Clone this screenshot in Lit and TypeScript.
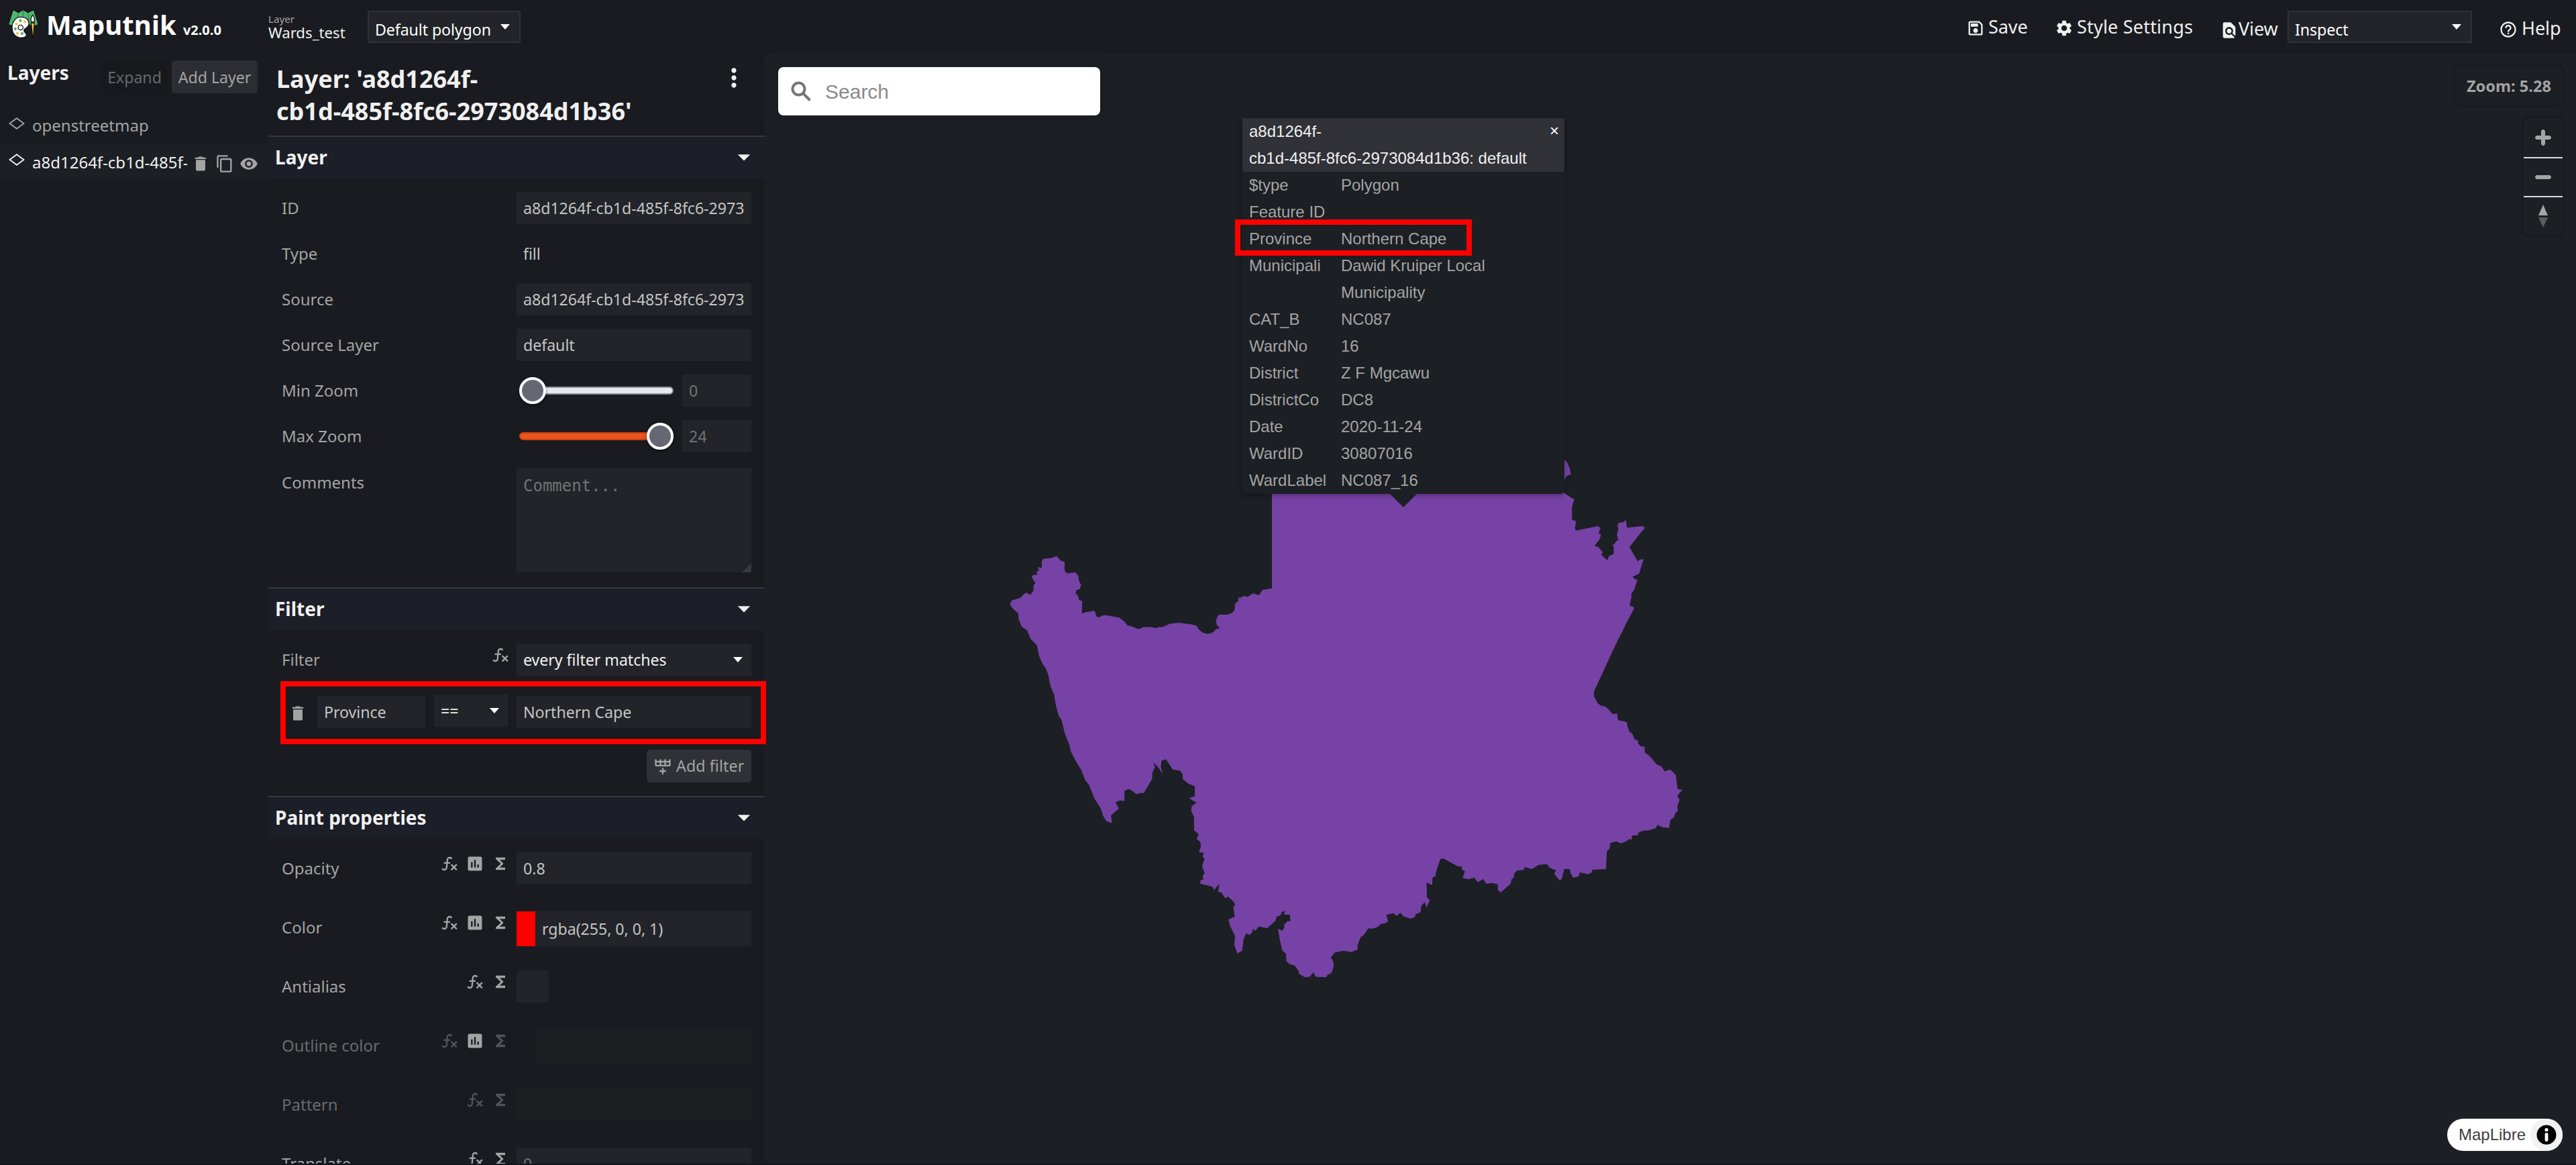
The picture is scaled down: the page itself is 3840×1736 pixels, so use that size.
import { LitElement, html, svg, css, nothing } from "lit";
import { customElement } from "lit/decorators.js";
import { classMap } from "lit/directives/class-map.js";

const ICONS: Record<string, string> = {
  save: "M17 3H5c-1.11 0-2 .9-2 2v14c0 1.1.89 2 2 2h14c1.1 0 2-.9 2-2V7l-4-4zm2 16H5V5h11.17L19 7.83V19zm-7-7c-1.66 0-3 1.34-3 3s1.34 3 3 3 3-1.34 3-3-1.34-3-3-3zM6 6h9v4H6z",
  settings: "M19.14 12.94c.04-.3.06-.61.06-.94 0-.32-.02-.64-.07-.94l2.03-1.58a.49.49 0 0 0 .12-.61l-1.92-3.32a.488.488 0 0 0-.59-.22l-2.39.96c-.5-.38-1.03-.7-1.62-.94l-.36-2.54a.484.484 0 0 0-.48-.41h-3.84c-.24 0-.43.17-.47.41l-.36 2.54c-.59.24-1.13.57-1.62.94l-2.39-.96c-.22-.08-.47 0-.59.22L2.74 8.87c-.12.21-.08.47.12.61l2.03 1.58c-.05.3-.09.63-.09.94s.02.64.07.94l-2.03 1.58a.49.49 0 0 0-.12.61l1.92 3.32c.12.22.37.29.59.22l2.39-.96c.5.38 1.03.7 1.62.94l.36 2.54c.05.24.24.41.48.41h3.84c.24 0 .44-.17.47-.41l.36-2.54c.59-.24 1.13-.56 1.62-.94l2.39.96c.22.08.47 0 .59-.22l1.92-3.32c.12-.22.07-.47-.12-.61l-2.01-1.58zM12 15.6c-1.98 0-3.6-1.62-3.6-3.6s1.62-3.6 3.6-3.6 3.6 1.62 3.6 3.6-1.62 3.6-3.6 3.6z",
  find: "M20 19.59V8l-6-6H6c-1.1 0-1.99.9-1.99 2L4 20c0 1.1.89 2 1.99 2H18c.45 0 .85-.15 1.19-.4l-4.43-4.43c-.8.52-1.74.83-2.76.83-2.76 0-5-2.24-5-5s2.24-5 5-5 5 2.24 5 5c0 1.02-.31 1.96-.83 2.75L20 19.59zM9 13c0 1.66 1.34 3 3 3s3-1.34 3-3-1.34-3-3-3-3 1.34-3 3z",
  help: "M11 18h2v-2h-2v2zm1-16C6.48 2 2 6.48 2 12s4.48 10 10 10 10-4.48 10-10S17.52 2 12 2zm0 18c-4.41 0-8-3.59-8-8s3.59-8 8-8 8 3.59 8 8-3.59 8-8 8zm0-14c-2.21 0-4 1.79-4 4h2c0-1.1.9-2 2-2s2 .9 2 2c0 2-3 1.75-3 5h2c0-2.25 3-2.5 3-5 0-2.21-1.79-4-4-4z",
  trash: "M6 19c0 1.1.9 2 2 2h8c1.1 0 2-.9 2-2V7H6v12zM19 4h-3.5l-1-1h-5l-1 1H5v2h14V4z",
  copy: "M16 1H4c-1.1 0-2 .9-2 2v14h2V3h12V1zm3 4H8c-1.1 0-2 .9-2 2v14c0 1.1.9 2 2 2h11c1.1 0 2-.9 2-2V7c0-1.1-.9-2-2-2zm0 16H8V7h11v14z",
  eye: "M12 4.5C7 4.5 2.73 7.61 1 12c1.73 4.39 6 7.5 11 7.5s9.27-3.11 11-7.5c-1.73-4.39-6-7.5-11-7.5zM12 17c-2.76 0-5-2.24-5-5s2.24-5 5-5 5 2.24 5 5-2.24 5-5 5zm0-8c-1.66 0-3 1.34-3 3s1.34 3 3 3 3-1.34 3-3-1.34-3-3-3z",
  chart: "M19 3H5c-1.1 0-2 .9-2 2v14c0 1.1.9 2 2 2h14c1.1 0 2-.9 2-2V5c0-1.1-.9-2-2-2zM9 17H7v-7h2v7zm4 0h-2V7h2v10zm4 0h-2v-4h2v4z",
  sigma: "M18 4H6v2l6.5 6L6 18v2h12v-3h-7l5-5-5-5h7z",
  fx: "M12.42 5.29C11.32 5.19 10.35 6 10.25 7.11L10 10H12.82V12H9.82L9.38 17.07C9.18 19.27 7.24 20.9 5.04 20.7C3.79 20.59 2.66 19.9 2 18.83L3.5 17.33C3.83 18.38 4.96 18.97 6 18.63C6.78 18.39 7.33 17.7 7.4 16.89L7.82 12H4.82V10H8L8.27 6.93C8.46 4.73 10.39 3.1 12.6 3.28C13.86 3.39 15 4.09 15.66 5.17L14.16 6.67C13.91 5.9 13.23 5.36 12.42 5.29M22 13.65L20.59 12.24L17.76 15.07L14.93 12.24L13.5 13.65L16.35 16.5L13.5 19.31L14.93 20.72L17.76 17.9L20.59 20.72L22 19.31L19.17 16.5L22 13.65Z",
  rowPlus: "M22,10A2,2 0 0,1 20,12H4A2,2 0 0,1 2,10V3H4V5H8V3H10V5H14V3H16V5H20V3H22V10M4,10H8V7H4V10M10,10H14V7H10V10M20,10V7H16V10H20M11,14H13V17H16V19H13V22H11V19H8V17H11V14Z",
  more: "M12 8c1.1 0 2-.9 2-2s-.9-2-2-2-2 .9-2 2 .9 2 2 2zm0 2c-1.1 0-2 .9-2 2s.9 2 2 2 2-.9 2-2-.9-2-2-2zm0 6c-1.1 0-2 .9-2 2s.9 2 2 2 2-.9 2-2-.9-2-2-2z",
  drop: "M7 10l5 5 5-5z",
};

const icon = (name: string, cls = "") => html`
  <svg class="icon ${cls}" viewBox="0 0 24 24" fill-rule="evenodd"><path d=${ICONS[name]}></path></svg>`;

/** Maps outline vertices of one tile to map coordinates. */
const tile = (ox: number, oy: number, sx: number, sy: number, pts: string) =>
  pts.trim().split(/\s+/).map((p) => {
    const [x, y] = p.split(",").map(Number);
    return `${(ox + x / sx).toFixed(1)},${(oy + y / sy).toFixed(1)}`;
  }).join(" ");

const WARD_OUTLINE = [
  tile(340, 600, 2.8, 2.8, `1165,20 1165,551 1140,555 1125,558 1112,579 1098,576 1087,572 1062,587 1048,582 1032,590 1026,588 1024,605
   1011,614 1009,640 1000,652 980,660 950,660 940,664 931,686 935,704 948,716 930,722 922,732 908,739 892,741 875,735 860,722 850,707
   830,701 800,697 775,694 738,699 710,712 690,713 680,717 660,712 630,713 608,721 595,716 580,709 562,706 550,690 528,673 510,670 473,663
   455,665 443,672 431,667 427,648 417,643 412,648 395,648 371,655 373,625 373,603 360,600 356,583 345,570 350,557 362,554 369,538 360,520
   357,500 346,485 328,486 313,489 303,483 299,470 300,440 285,437 265,415 258,420 240,425 212,427 205,435 204,463 197,466 191,460 188,466
   194,475 182,483 186,494 170,494 162,502 170,518 178,528 169,541 170,560 158,576 150,577 145,568 132,573 115,590 80,601 71,616 80,632
   106,656 108,680 120,710 143,727 158,762 184,789 192,830 207,865 221,885 231,910 241,960 256,995 262,1035 275,1083 287,1100 300,1155
   320,1205 325,1230 345,1270 370,1310 385,1350 402,1372 425,1430 450,1468 460,1500 474,1522 497,1530 493,1498 526,1470 512,1443 530,1436
   549,1438 550,1395 568,1388 580,1394 600,1410 613,1405 630,1405 665,1345 666,1318 677,1297 670,1277 690,1297 711,1327 701,1297 704,1270
   723,1264 751,1307 780,1311 792,1325 793,1347 815,1365 843,1377 843,1418 819,1426 850,1445 830,1460 828,1480 840,1505 840,1560`),
  tile(600, 1000, 1.96, 3, `78,470 92,490 86,510 97,525 98,545 93,569 107,573 103,590 109,598 102,632 109,662 103,678 106,690 97,697 96,710
   132,724 137,739 152,710 149,747 158,750 170,776 178,768 192,788 199,803 193,815 197,857 179,871 184,900 198,945 196,985 205,1022 219,1010
   223,960 230,933 240,939 248,930 250,912 257,921 268,902 292,909 316,877 320,857 330,853 335,836 344,832 341,848 358,849 360,879 352,877
   341,895 342,907 336,920 324,912 328,955 336,1008 347,1023 348,1057 358,1070 372,1076 384,1100 385,1113 401,1128 416,1127 427,1106
   434,1127 465,1128 468,1118 480,1109 487,1075 484,1055 478,1040 490,1018 515,1010 538,1016 556,1005 556,985 565,950 575,938 588,909
   598,912 613,905 625,890 636,888 645,880 640,850 661,842 670,855 681,841 691,857 712,867 722,860 727,846 740,838 742,810 752,793 758,816
   767,785 758,768 759,735 757,705 774,717 775,683 783,677 786,655 798,600 807,598 848,632 860,634 861,648 870,655 863,685 880,690 897,683
   907,704 923,690 932,711 950,707 966,714 966,738 974,750 1004,710 1006,690 1012,685 1014,665 1022,652 1042,648 1044,636 1065,645 1085,626
   1110,623 1117,640 1136,650 1131,667 1147,697 1153,688 1160,645 1176,645 1178,662 1186,684 1202,677 1206,660 1230,668 1240,661 1242,648
   1282,645 1283,600 1285,564 1292,555 1295,528 1312,521 1325,530 1340,522 1349,511 1356,515 1358,495 1374,494 1378,480 1390,474 1407,472
   1426,463 1433,447 1447,458 1466,461 1470,425 1480,415 1485,392 1492,385 1490,365 1497,335 1490,317 1505,290 1491,288 1488,250 1486,225
   1470,200 1453,208 1443,185 1430,178 1410,140 1395,123 1395,98 1384,97 1376,85 1376,72 1366,65 1358,40 1350,30 1343,0`),
  tile(860, 600, 2.904, 3, `1237,1192 1225,1185 1197,1180 1192,1150 1172,1152 1155,1130 1140,1118 1123,1115 1110,1105 1093,1075 1092,1052
   1180,855 1235,740 1266,680 1263,673 1246,668 1256,622 1252,618 1266,598 1280,553 1267,548 1260,537 1270,533 1288,524 1307,460 1290,462
   1282,470 1246,406 1254,395 1290,347 1314,319 1300,312 1235,319 1230,284 1220,294 1198,298 1194,312 1198,325 1191,350 1198,374 1190,377
   1180,393 1171,396 1178,404 1178,432 1172,440 1158,444 1150,464 1124,441 1130,428 1108,402 1103,405 1095,399 1116,372 1123,350 1112,344
   1121,320 1108,312 1014,332 1010,322 1015,290 997,283 997,228 1007,190 998,188 962,163 950,140 964,105 975,87 992,80 988,55 975,25 966,18
   940,18`),
].join(" ");

interface Prop {
  label: string;
  icons: string[];
  kind: "text" | "color" | "check";
  value?: string;
  unset?: boolean;
  placeholder?: boolean;
}

const PAINT: Prop[] = [
  { label: "Opacity", icons: ["fx", "chart", "sigma"], kind: "text", value: "0.8" },
  { label: "Color", icons: ["fx", "chart", "sigma"], kind: "color", value: "rgba(255, 0, 0, 1)" },
  { label: "Antialias", icons: ["fx", "sigma"], kind: "check" },
  { label: "Outline color", icons: ["fx", "chart", "sigma"], kind: "color", unset: true },
  { label: "Pattern", icons: ["fx", "sigma"], kind: "text", unset: true },
  { label: "Translate", icons: ["fx", "sigma"], kind: "text", value: "0", placeholder: true },
];

const FEATURE: [string, string][] = [
  ["$type", "Polygon"],
  ["Feature ID", ""],
  ["Province", "Northern Cape"],
  ["Municipali", "Dawid Kruiper Local Municipality"],
  ["CAT_B", "NC087"],
  ["WardNo", "16"],
  ["District", "Z F Mgcawu"],
  ["DistrictCo", "DC8"],
  ["Date", "2020-11-24"],
  ["WardID", "30807016"],
  ["WardLabel", "NC087_16"],
];

const shared = css`
  :host { box-sizing: border-box; }
  * { box-sizing: border-box; }
  .icon { display: block; flex: none; width: 28px; height: 28px; fill: currentColor; }
  .caret {
    flex: none; width: 14px; height: 8px; background: #fff;
    clip-path: polygon(0 0, 100% 0, 50% 100%);
  }
  .ui { font-size: 23.2px; letter-spacing: -0.05px; }
`;

@customElement("app-toolbar")
class AppToolbar extends LitElement {
  static styles = [shared, css`
    :host { display: flex; height: 80px; background: #191b20; color: #f0f0f0; }
    .brand { display: flex; width: 400px; padding-left: 10px; }
    .logo { width: 50px; height: 47px; margin-top: 11px; }
    .title { display: flex; align-items: baseline; height: 48px; margin: 13px 0 0 9px; gap: 10px; color: #fff; font-weight: 700; }
    .name { font-size: 40px; line-height: 48px; letter-spacing: 0.1px; }
    .version { font-size: 20px; }
    .source { width: 148px; padding-top: 18px; white-space: nowrap; }
    .small { font-size: 15.2px; line-height: 20px; color: #a4a4a4; }
    .file { font-size: 22.2px; line-height: 22px; }
    .select {
      display: flex; align-items: center; justify-content: space-between;
      height: 48px; margin-top: 16px; padding: 0 14px 0 9px;
      border: 2px solid #303237; background: #222429; color: #fff;
    }
    .select .ui { padding-top: 7px; letter-spacing: -0.1px; }
    .style { width: 228px; }
    .mode { width: 275px; }
    .gap { flex: 1; }
    .action { display: flex; align-items: center; height: 80px; font-size: 27px; letter-spacing: -0.1px; white-space: nowrap; }
    .action .icon { margin-top: 5px; }
    .save { width: 132px; padding-bottom: 1px; }
    .prefs { width: 246px; padding-bottom: 1px; letter-spacing: 0.2px; }
    .view { width: 101px; padding-top: 5px; }
    .help { width: 155px; padding: 2px 0 0 40px; }
    .save .icon, .prefs .icon { margin-right: 5px; }
    .help .icon { margin-right: 6px; }
  `];
  render() {
    const green = "#4fb86f", yellow = "#f7c04a";
    return html`
      <div class="brand">
        <svg class="logo" viewBox="30 3 150 141" stroke="#111" stroke-width="4" stroke-linejoin="round">
          <path fill=${green} d="M58 13L82 26L104 13L125 26L151 13L172 80L150 89L104 70L62 88L37 80Z"></path>
          <path fill="none" stroke="#236b3a" stroke-width="2.5" d="M82 26L76 74M104 14V56M125 26L130 78"></path>
          <path fill="#fff" d="M92 46C120 46 131 62 129 80C127 95 107 94 107 107C108 117 122 117 118 130C110 141 92 140 82 137C62 130 54 112 54 92C55 65 72 46 92 46Z"></path>
          <circle cx="92" cy="93" r="11" fill="#fff"></circle>
          <g stroke="none">
            ${[[91, 62], [68, 99], [99, 120]].map(([x, y]) => svg`<circle cx=${x} cy=${y} r="6.5" fill=${green}></circle>`)}
            ${[[111, 67], [74, 77], [78, 119]].map(([x, y]) => svg`<circle cx=${x} cy=${y} r="6.5" fill=${yellow}></circle>`)}
          </g>
          <path fill=${yellow} d="M139 72H154L149 137H146Z"></path>
          <path fill="#fff" d="M146 36C137 50 136 62 142 69H151C157 62 155 50 146 36Z"></path>
        </svg>
        <div class="title"><span class="name">Maputnik</span><span class="version">v2.0.0</span></div>
      </div>
      <div class="source"><div class="small">Layer</div><div class="file">Wards_test</div></div>
      <div class="select style"><span class="ui">Default polygon</span><span class="caret"></span></div>
      <div class="gap"></div>
      <div class="action save">${icon("save")}<span>Save</span></div>
      <div class="action prefs">${icon("settings")}<span>Style Settings</span></div>
      <div class="action view">${icon("find")}<span>View</span></div>
      <div class="select mode"><span class="ui">Inspect</span><span class="caret"></span></div>
      <div class="action help">${icon("help")}<span>Help</span></div>
    `;
  }
}

@customElement("layer-list")
class LayerList extends LitElement {
  static styles = [shared, css`
    :host { display: block; width: 400px; background: #191b20; color: #a4a4a4; }
    .head { display: flex; align-items: flex-start; height: 80px; padding: 10px 16px 0 11px; }
    .title { flex: 1; color: #f0f0f0; font-weight: 700; font-size: 28px; line-height: 36px; }
    .btn { display: flex; align-items: center; justify-content: center; height: 49px; border-radius: 5px; }
    .expand { width: 99px; margin-right: 6px; color: #66676a; background: #18191d; }
    .add { width: 128px; background: #2c2d32; }
    .row { display: flex; align-items: center; height: 54px; padding: 0 15px 1px 13px; font-size: 24px; white-space: nowrap; }
    .row.active { height: 53px; padding: 1px 15px 0 13px; background: #1c1f24; color: #f0f0f0; }
    .diamond { flex: none; width: 24px; height: 18px; margin: 0 11px 5px 0; fill: none; stroke: currentColor; stroke-width: 1.9; }
    .active .diamond { margin-bottom: 6px; }
    .name { flex: 1; overflow: hidden; }
    .tools { display: flex; gap: 8px; margin-left: 6px; padding-top: 5px; color: #a4a4a4; }
  `];
  row(name: string, active = false) {
    return html`
      <div class=${classMap({ row: true, active })}>
        <svg class="diamond" viewBox="0 0 24 18"><path d="M1.5 9L12 1.2L22.5 9L12 16.8Z"></path></svg>
        <span class="name">${name}</span>
        ${active ? html`<div class="tools">${icon("trash")}${icon("copy")}${icon("eye")}</div>` : nothing}
      </div>`;
  }
  render() {
    return html`
      <div class="head">
        <span class="title">Layers</span>
        <span class="btn expand ui">Expand</span>
        <span class="btn add ui">Add Layer</span>
      </div>
      ${this.row("openstreetmap")}
      ${this.row("a8d1264f-cb1d-485f-8fc6-2973084d1b36", true)}
    `;
  }
}

@customElement("layer-editor")
class LayerEditor extends LitElement {
  static styles = [shared, css`
    :host { display: block; position: relative; z-index: 1; width: 740px; background: #191b20; color: #a4a4a4; font-size: 24px; }
    .header { display: flex; justify-content: space-between; height: 122px; padding: 14px 24px 0 12px; color: #f0f0f0; }
    .name { font-weight: 700; font-size: 36px; line-height: 48px; white-space: nowrap; }
    .line { display: block; }
    .more { width: 44px; height: 44px; }
    .group { display: flex; align-items: center; justify-content: space-between; height: 64px; padding: 0 9px 2px 10px; border-top: 2px solid #36383e; background: #1c1f27; color: #f0f0f0; font-weight: 700; font-size: 28px; }
    .group .icon { width: 44px; height: 44px; }
    .body { display: flex; flex-direction: column; gap: 20px; padding: 20px 20px 22px; }
    .row { display: flex; min-height: 48px; }
    .label { flex: 1; line-height: 48px; }
    .field { flex: none; display: flex; align-items: center; width: 350px; height: 48px; }
    .input { display: block; flex: 1; min-width: 0; height: 48px; padding: 0 10px; background: #222429; color: #c4c4c5; white-space: nowrap; line-height: 48px; }
    .clip { display: block; overflow: hidden; }
    .plain { background: none; }
    .hint { color: #717276; }
    .select { display: flex; align-items: center; justify-content: space-between; padding-right: 13px; color: #f0f0f0; }
    .slider { position: relative; width: 230px; height: 12px; margin: 0 13px 0 4px; border-radius: 6px; border: 2px solid #8f8f9d; background: #e9e7ef; }
    .slider.full { background: #e95420; border-color: #c94209; }
    .thumb { position: absolute; top: -16px; left: -2px; width: 40px; height: 40px; border-radius: 50%; border: 4px solid #fff; background: #676774; box-shadow: 0 2px 4px rgba(0, 0, 0, 0.5); }
    .full .thumb { left: 188px; }
    .comments { margin-top: 3px; }
    .comments .label { line-height: 43px; }
    .area { display: flex; align-items: flex-end; justify-content: space-between; width: 350px; height: 156px; background: #222429; }
    .area span { align-self: flex-start; padding: 11px 10px 0; font-family: "DejaVu Sans Mono", monospace; font-size: 24px; line-height: 32px; }
    .grip { width: 12px; height: 12px; stroke: #77787c; stroke-width: 1; }
    .filters { padding-bottom: 20px; gap: 0; }
    .icons { display: flex; gap: 10px; padding: 3px 10px 0 0; }
    .icon.unset { opacity: 0.42; }
    .label.unset { opacity: 0.58; }
    .rule { display: flex; align-items: flex-start; margin-top: 28px; height: 50px; padding-top: 2px; }
    .rule .icon { margin: 12px 9px 0 10px; }
    .rule .key { flex: none; width: 161px; margin-left: 6px; }
    .rule .op { flex: none; width: 110px; margin: -2px 13px 0; }
    .add { display: flex; align-items: center; align-self: flex-end; gap: 6px; width: 156px; height: 49px; margin-top: 32px; padding-left: 10px; border-radius: 5px; background: #2f3136; white-space: nowrap; letter-spacing: 0.1px; }
    .add span { padding-bottom: 1px; }
    .paint { gap: 40px; }
    .paint .row { height: 48px; }
    .swatch { flex: none; width: 28px; height: 52px; background: #191b20; }
    .swatch.red { background: #f00; }
    .color { align-items: flex-start; }
    .color .input { height: 52px; line-height: 52px; }
    .check { width: 48px; height: 48px; border-radius: 4px; background: #222429; }
    .input.empty { background: #1d1e22; }
    .mark { position: absolute; left: 18px; top: 935px; width: 724px; height: 94px; border: 8px solid #f00; }
  `];
  text(label: string, value: string, plain = false) {
    return html`
      <div class="row"><span class="label">${label}</span>
        <div class="field"><span class=${classMap({ input: true, ui: true, plain })}><span class="clip">${value}</span></span></div>
      </div>`;
  }
  zoom(label: string, value: string, full: boolean) {
    return html`
      <div class="row"><span class="label">${label}</span>
        <div class="field">
          <div class=${classMap({ slider: true, full })}><span class="thumb"></span></div>
          <span class="input ui hint">${value}</span>
        </div>
      </div>`;
  }
  group(name: string) {
    return html`<div class="group"><span>${name}</span>${icon("drop")}</div>`;
  }
  paint(p: Prop) {
    const input = html`<span class=${classMap({ input: true, ui: true, empty: !!p.unset, hint: !!p.placeholder })}>${p.value ?? ""}</span>`;
    const field = p.kind === "check" ? html`<span class="check"></span>`
      : p.kind === "color" ? html`<span class=${classMap({ swatch: true, red: !p.unset })}></span>${input}`
      : input;
    return html`
      <div class="row">
        <span class=${classMap({ label: true, unset: !!p.unset })}>${p.label}</span>
        <div class="icons">${p.icons.map((n) => icon(n, p.unset && n !== "chart" ? "unset" : ""))}</div>
        <div class=${classMap({ field: true, color: p.kind === "color" })}>${field}</div>
      </div>`;
  }
  render() {
    return html`
      <div class="header">
        <div class="name"><span class="line">Layer: 'a8d1264f-</span><span class="line">cb1d-485f-8fc6-2973084d1b36'</span></div>
        ${icon("more", "more")}
      </div>
      ${this.group("Layer")}
      <div class="body">
        ${this.text("ID", "a8d1264f-cb1d-485f-8fc6-2973084d1b36")}
        ${this.text("Type", "fill", true)}
        ${this.text("Source", "a8d1264f-cb1d-485f-8fc6-2973084d1b36")}
        ${this.text("Source Layer", "default")}
        ${this.zoom("Min Zoom", "0", false)}
        ${this.zoom("Max Zoom", "24", true)}
        <div class="row comments"><span class="label">Comments</span>
          <div class="area hint"><span>Comment...</span>
            <svg class="grip" viewBox="0 0 12 12"><path d="M0 12L12 0M4 12L12 4M8 12L12 8"></path></svg>
          </div>
        </div>
      </div>
      ${this.group("Filter")}
      <div class="body filters">
        <div class="row"><span class="label">Filter</span>
          <div class="icons">${icon("fx")}</div>
          <div class="field"><span class="input ui select">every filter matches<span class="caret"></span></span></div>
        </div>
        <div class="rule">
          ${icon("trash")}
          <span class="input ui key">Province</span>
          <span class="input ui select op">==<span class="caret"></span></span>
          <span class="input ui">Northern Cape</span>
        </div>
        <div class="add ui">${icon("rowPlus")}<span>Add filter</span></div>
      </div>
      ${this.group("Paint properties")}
      <div class="body paint">${PAINT.map((p) => this.paint(p))}</div>
      <div class="mark"></div>
    `;
  }
}

@customElement("map-view")
class MapView extends LitElement {
  static styles = [shared, css`
    :host { display: block; position: relative; flex: 1; background: #1c1f24; color: #a4a4a4; overflow: hidden; }
    .ward { position: absolute; left: 0; top: 0; width: 2700px; height: 1656px; fill: #7742a6; }
    .search {
      position: absolute; left: 20px; top: 20px; width: 480px; height: 72px;
      display: flex; align-items: center; gap: 20px; padding: 1px 0 0 19px;
      border-radius: 8px; background: #fff; color: #8a8a8a;
      font: 30px "Liberation Sans", Arial, sans-serif;
      box-shadow: 0 0 20px 4px rgba(0, 0, 0, 0.1);
    }
    .lens { width: 31px; height: 31px; fill: none; stroke: #757575; stroke-width: 4; }
    .popup {
      position: absolute; left: 712px; top: 96px; width: 480px; height: 560px;
      background: #1c1f24; border-radius: 0 0 6px 6px; box-shadow: 0 2px 10px rgba(0, 0, 0, 0.3);
      font: 24px/40px "Liberation Sans", Arial, sans-serif;
    }
    .top { display: flex; justify-content: space-between; padding: 0 8px 0 10px; background: #303237; color: #f0f0f0; white-space: nowrap; }
    .line { display: block; }
    .close { display: flex; align-items: center; height: 38px; color: #fff; font-size: 24px; }
    .feature { display: grid; grid-template-columns: 137px 270px; padding-left: 10px; }
    .tip { position: absolute; left: 219px; top: 559px; width: 42px; height: 21px; background: #1c1f24; clip-path: polygon(0 0, 100% 0, 50% 100%); }
    .mark { position: absolute; left: 701px; top: 247px; width: 353px; height: 54px; border: 8px solid #f00; }
    .controls { position: absolute; right: 20px; top: 20px; display: flex; flex-direction: column; align-items: flex-end; gap: 20px; }
    .zoom { display: flex; align-items: center; height: 56px; padding: 0 17px; font-size: 23.6px; font-weight: 700; }
    .zoom, .nav { border-radius: 8px; box-shadow: 0 0 0 4px rgba(0, 0, 0, 0.1); }
    .nav { display: flex; flex-direction: column; width: 58px; }
    .key { display: flex; align-items: center; justify-content: center; height: 58px; }
    .key + .key { border-top: 2px solid #ddd; }
    .glyph { width: 58px; height: 58px; fill: #a4a4a4; }
    .credit {
      position: absolute; right: 20px; bottom: 19px; display: flex; align-items: center; justify-content: space-between;
      width: 172px; height: 48px; padding-left: 17px; border-radius: 24px; background: #fff; color: #404040;
      font: 24px "Liberation Sans", Arial, sans-serif;
    }
    .info { width: 48px; height: 48px; }
  `];
  render() {
    return html`
      <svg class="ward" viewBox="0 0 2700 1656"><polygon points=${WARD_OUTLINE}></polygon></svg>
      <div class="search">
        <svg class="lens" viewBox="0 0 31 31"><circle cx="11.5" cy="11.5" r="9"></circle><path d="M18 18L28.5 28.5"></path></svg>
        <span>Search</span>
      </div>
      <div class="popup">
        <div class="top">
          <div><span class="line">a8d1264f-</span><span class="line">cb1d-485f-8fc6-2973084d1b36: default</span></div>
          <span class="close">×</span>
        </div>
        <div class="feature">${FEATURE.map(([k, v]) => html`<span>${k}</span><span>${v}</span>`)}</div>
        <div class="tip"></div>
      </div>
      <div class="mark"></div>
      <div class="controls">
        <div class="zoom">Zoom: 5.28</div>
        <div class="nav">
          <div class="key"><svg class="glyph" viewBox="0 0 29 29"><path d="M14.5 8.5c-.75 0-1.5.75-1.5 1.5v3h-3c-.75 0-1.5.75-1.5 1.5S9.25 16 10 16h3v3c0 .75.75 1.5 1.5 1.5S16 19.75 16 19v-3h3c.75 0 1.5-.75 1.5-1.5S19.75 13 19 13h-3v-3c0-.75-.75-1.5-1.5-1.5z"></path></svg></div>
          <div class="key"><svg class="glyph" viewBox="0 0 29 29"><path d="M10 13c-.75 0-1.5.75-1.5 1.5S9.25 16 10 16h9c.75 0 1.5-.75 1.5-1.5S19.75 13 19 13h-9z"></path></svg></div>
          <div class="key"><svg class="glyph" viewBox="0 0 29 29"><path d="M11 14l3.5-8 3.5 8z"></path><path fill="#5a5b5d" d="M11 15.5l3.5 7.5 3.5-7.5z"></path></svg></div>
        </div>
      </div>
      <div class="credit"><span>MapLibre</span>
        <svg class="info" viewBox="0 0 48 48"><circle cx="24" cy="24" r="24" fill="#f2f2f2"></circle><circle cx="24" cy="24" r="14.5"></circle>
          <circle cx="24" cy="16.5" r="2.6" fill="#fff"></circle><rect x="21.6" y="21" width="4.8" height="13" rx="2.2" fill="#fff"></rect></svg>
      </div>
    `;
  }
}

@customElement("app-root")
class AppRoot extends LitElement {
  static styles = css`
    :host { display: flex; flex-direction: column; width: 3840px; height: 1736px; overflow: hidden; background: #121419; font-family: "Noto Sans", sans-serif; }
    .main { display: flex; height: 1654px; overflow: hidden; }
  `;
  render() {
    return html`
      <app-toolbar></app-toolbar>
      <div class="main">
        <layer-list></layer-list>
        <layer-editor></layer-editor>
        <map-view></map-view>
      </div>`;
  }
}
